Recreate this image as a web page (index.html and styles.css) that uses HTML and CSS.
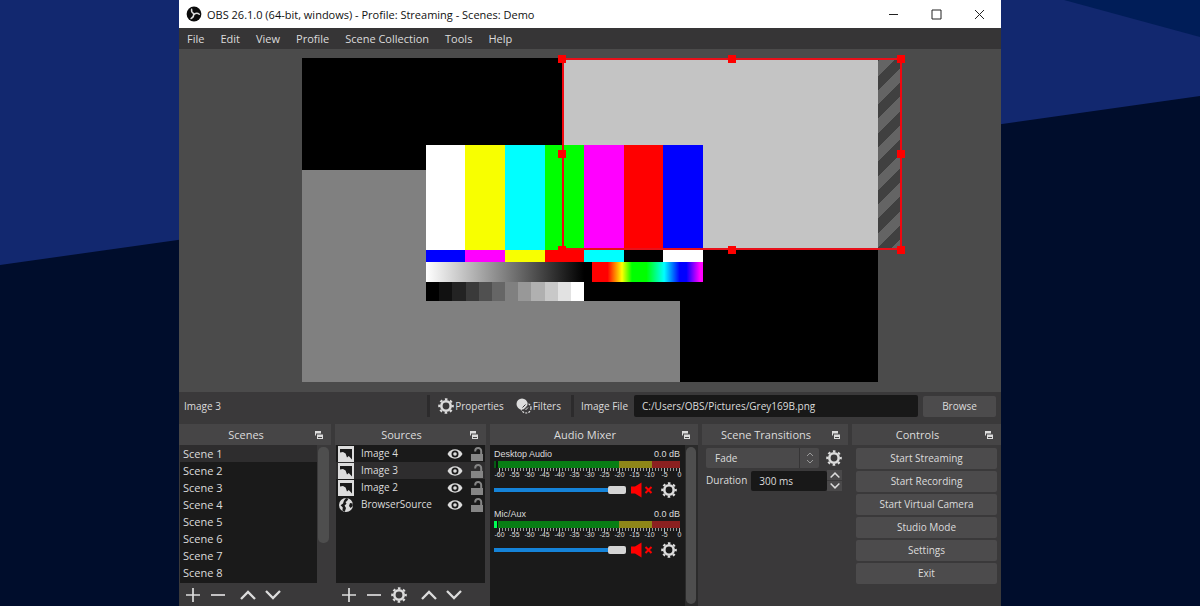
FILE: index.html
```html
<!DOCTYPE html>
<html lang="en">
<head>
  <meta charset="UTF-8">
  <title>OBS 26.1.0 - Profile: Streaming - Scenes: Demo</title>
  <meta name="viewport" content="width=device-width, initial-scale=1">
  <link rel="stylesheet" href="styles.css">
</head>
<body>
  <!-- desktop wallpaper -->
  <svg class="wallpaper" viewBox="0 0 1200 606" preserveAspectRatio="none" aria-hidden="true">
    <rect width="1200" height="606" fill="#12286f"/>
    <path d="M1064 0H1200V37Z" fill="#001d58"/>
    <path d="M0 265L1200 96V606H0Z" fill="#000d2c"/>
  </svg>

  <!-- shared icons -->
  <svg class="sprite" aria-hidden="true">
    <symbol id="gear" viewBox="0 0 16 16">
      <circle cx="8" cy="8" r="4.7" fill="none" stroke="currentColor" stroke-width="2.6"/>
      <circle cx="8" cy="8" r="6.8" fill="none" stroke="currentColor" stroke-width="2" stroke-dasharray="2.6 2.74" stroke-dashoffset="1.3"/>
    </symbol>
    <symbol id="plus" viewBox="0 0 16 16"><path d="M8 1V15M1 8H15" stroke="currentColor" stroke-width="1.7"/></symbol>
    <symbol id="minus" viewBox="0 0 16 16"><path d="M1 8H15" stroke="currentColor" stroke-width="1.7"/></symbol>
    <symbol id="up" viewBox="0 0 16 16"><path d="M1 12L8 5L15 12" fill="none" stroke="currentColor" stroke-width="2.3"/></symbol>
    <symbol id="down" viewBox="0 0 16 16"><path d="M1 4L8 11L15 4" fill="none" stroke="currentColor" stroke-width="2.3"/></symbol>
    <symbol id="float" viewBox="0 0 8 8">
      <path d="M0 0H6V2.500H1V4.500H0Z" fill="currentColor"/>
      <path d="M2 3.500H8V8H2ZM3 6V7H7V6Z" fill="currentColor" fill-rule="evenodd"/>
    </symbol>
    <symbol id="image" viewBox="0 0 16 16">
      <path d="M0 0H16V16H0Z" fill="currentColor"/>
      <path d="M2 3H14V13.5L10.8 10L9 11.5L7.6 7.5L5 6L2 6.5Z" fill="#1a1a1a"/>
    </symbol>
    <symbol id="globe" viewBox="0 0 16 16">
      <circle cx="8" cy="8" r="7" fill="currentColor"/>
      <path d="M8 1L10.5 1.8L9 4L7.5 5L8.5 6.8L6.6 8.5L8 11L6.8 14.8L4.4 13.6L4.8 10.5L2.6 8.2L5 6.5L6 3.5ZM12 6L14.6 6.4L14.8 9L12.6 11L11 9Z" fill="#1a1a1a"/>
    </symbol>
    <symbol id="eye" viewBox="0 0 16 12">
      <path d="M0.5 6C3.5 -0.2 12.5 -0.2 15.5 6C12.5 12.2 3.5 12.2 0.5 6Z" fill="currentColor"/>
      <circle cx="8" cy="6" r="3.5" fill="#1a1a1a"/>
      <circle cx="8" cy="6" r="1.8" fill="currentColor"/>
    </symbol>
    <symbol id="unlock" viewBox="0 0 12 14">
      <path d="M0 7H12V14H0Z" fill="currentColor"/>
      <path d="M4.2 4.5V4A3 3 0 0 1 10.2 4V8" fill="none" stroke="currentColor" stroke-width="2"/>
    </symbol>
    <symbol id="muted" viewBox="0 0 24 16">
      <path d="M1 4.5H5L11.5 0.500V15.500L5 11.500H1Z" fill="currentColor"/>
      <path d="M15.500 5L21.500 11M21.500 5L15.500 11" stroke="currentColor" stroke-width="2"/>
    </symbol>
  </svg>

  <main class="window">
    <header class="titlebar">
      <svg class="logo" viewBox="0 0 16 16" aria-hidden="true">
        <circle cx="8" cy="8" r="7.4" fill="#0b0b0b"/>
        <g fill="none" stroke="#ddd" stroke-width="1.5" stroke-linecap="round">
          <path d="M8 7.6C6.2 6.8 5.2 5.4 5.6 3.3"/>
          <path d="M8 7.6C6.2 6.8 5.2 5.4 5.6 3.3" transform="rotate(120 8 8)"/>
          <path d="M8 7.6C6.2 6.8 5.2 5.4 5.6 3.3" transform="rotate(240 8 8)"/>
        </g>
      </svg>
      <h1 class="title">OBS 26.1.0 (64-bit, windows) - Profile: Streaming - Scenes: Demo</h1>
      <div class="window-buttons">
        <button type="button" aria-label="Minimize"><svg viewBox="0 0 11 11"><path d="M1 5.5H10"/></svg></button>
        <button type="button" aria-label="Maximize"><svg viewBox="0 0 11 11"><path d="M1 1H10V10H1Z"/></svg></button>
        <button type="button" aria-label="Close"><svg viewBox="0 0 11 11"><path d="M1 1L10 10M10 1L1 10"/></svg></button>
      </div>
    </header>

    <nav class="menubar">
      <button type="button">File</button>
      <button type="button">Edit</button>
      <button type="button">View</button>
      <button type="button">Profile</button>
      <button type="button">Scene Collection</button>
      <button type="button">Tools</button>
      <button type="button">Help</button>
    </nav>

    <section class="preview" aria-label="Preview">
      <svg viewBox="0 0 822 343">
        <defs>
          <linearGradient id="stripes" gradientUnits="userSpaceOnUse" x1="700" y1="26" x2="714.3" y2="40.3" spreadMethod="repeat">
            <stop offset="0.5" stop-color="#404040"/>
            <stop offset="0.5" stop-color="#646464"/>
          </linearGradient>
          <linearGradient id="ramp">
            <stop offset="0" stop-color="#fff"/>
            <stop offset="1" stop-color="#000"/>
          </linearGradient>
          <linearGradient id="spectrum">
            <stop offset="0.14" stop-color="#f00"/>
            <stop offset="0.27" stop-color="#ff0"/>
            <stop offset="0.36" stop-color="#0f0"/>
            <stop offset="0.49" stop-color="#0f0"/>
            <stop offset="0.65" stop-color="#0ff"/>
            <stop offset="0.79" stop-color="#00f"/>
            <stop offset="0.85" stop-color="#00f"/>
            <stop offset="0.97" stop-color="#f0f"/>
          </linearGradient>
        </defs>
        <g shape-rendering="crispEdges">
          <rect x="123" y="9" width="576" height="324" fill="#000"/>
          <rect x="123" y="121" width="378" height="212" fill="#808080"/>
          <rect x="384" y="10" width="315" height="190" fill="#c4c4c4"/>
          <rect x="699" y="10" width="23" height="190" fill="url(#stripes)"/>
          <!-- test card -->
          <rect x="247" y="96" width="277" height="156" fill="#000"/>
          <rect x="247" y="96" width="39" height="105" fill="#fff"/>
          <rect x="286" y="96" width="40" height="105" fill="#f8ff00"/>
          <rect x="326" y="96" width="40" height="105" fill="#0ff"/>
          <rect x="366" y="96" width="39" height="105" fill="#0f0"/>
          <rect x="405" y="96" width="40" height="105" fill="#f0f"/>
          <rect x="445" y="96" width="39" height="105" fill="#f00"/>
          <rect x="484" y="96" width="40" height="105" fill="#00f"/>
          <rect x="247" y="201" width="39" height="12" fill="#00f"/>
          <rect x="286" y="201" width="40" height="12" fill="#f0f"/>
          <rect x="326" y="201" width="40" height="12" fill="#f8ff00"/>
          <rect x="366" y="201" width="39" height="12" fill="#f00"/>
          <rect x="405" y="201" width="40" height="12" fill="#0ff"/>
          <rect x="484" y="201" width="40" height="12" fill="#fff"/>
          <rect x="247" y="213" width="158" height="20" fill="url(#ramp)"/>
          <rect x="413" y="213" width="111" height="20" fill="url(#spectrum)"/>
          <rect x="260" y="233" width="13" height="19" fill="#111"/>
          <rect x="273" y="233" width="14" height="19" fill="#232323"/>
          <rect x="287" y="233" width="13" height="19" fill="#3a3a3a"/>
          <rect x="300" y="233" width="13" height="19" fill="#505050"/>
          <rect x="313" y="233" width="13" height="19" fill="#666"/>
          <rect x="326" y="233" width="13" height="19" fill="#808080"/>
          <rect x="339" y="233" width="13" height="19" fill="#989898"/>
          <rect x="352" y="233" width="14" height="19" fill="#b0b0b0"/>
          <rect x="366" y="233" width="13" height="19" fill="#c8c8c8"/>
          <rect x="379" y="233" width="13" height="19" fill="#e2e2e2"/>
          <rect x="392" y="233" width="13" height="19" fill="#fff"/>
          <!-- selected source outline -->
          <path d="M383 10H723M383 200H723" stroke="#e8101a" stroke-width="2"/>
          <path d="M384 10V200M722 10V200" stroke="#f00810" stroke-width="2"/>
          <path d="M379 6h8v8h-8zM549 6h8v8h-8zM718 6h8v8h-8zM379 101h8v8h-8zM718 101h8v8h-8zM379 197h8v8h-8zM549 197h8v8h-8zM718 197h8v8h-8z" fill="#f00"/>
        </g>
      </svg>
    </section>

    <section class="context">
      <span class="context-name">Image 3</span>
      <button class="tool" type="button"><svg class="icon"><use href="#gear"/></svg>Properties</button>
      <button class="tool" type="button">
        <svg class="icon" viewBox="0 0 16 16">
          <circle cx="6" cy="6" r="5.5" fill="currentColor"/>
          <circle cx="10" cy="10" r="5" fill="none" stroke="currentColor" stroke-width="1.2" stroke-dasharray="2 1.2"/>
          <path d="M6.5 9.500L9.500 6.500M8 11.500L11.500 8" stroke="#3a393a" stroke-width="1"/>
          <path d="M7.500 10.500L10.500 7.500M9.500 12L12 9.500" stroke="currentColor" stroke-width="1"/>
        </svg>Filters</button>
      <label class="file-label" for="file">Image File</label>
      <input class="file" id="file" type="text" value="C:/Users/OBS/Pictures/Grey169B.png">
      <button class="btn browse" type="button">Browse</button>
    </section>

    <div class="docks">
      <section class="dock">
        <h2 class="dock-title"><span>Scenes</span><button type="button" aria-label="Float Scenes"><svg><use href="#float"/></svg></button></h2>
        <div class="list-wrap">
          <ul class="list scenes">
            <li class="selected">Scene 1</li>
            <li>Scene 2</li>
            <li>Scene 3</li>
            <li>Scene 4</li>
            <li>Scene 5</li>
            <li>Scene 6</li>
            <li>Scene 7</li>
            <li>Scene 8</li>
          </ul>
          <div class="scrollbar"><div class="thumb thumb-scenes"></div></div>
        </div>
        <div class="toolbar">
          <button type="button" aria-label="Add scene"><svg class="icon"><use href="#plus"/></svg></button>
          <button type="button" aria-label="Remove scene"><svg class="icon"><use href="#minus"/></svg></button>
          <button class="push" type="button" aria-label="Move scene up"><svg class="icon"><use href="#up"/></svg></button>
          <button type="button" aria-label="Move scene down"><svg class="icon"><use href="#down"/></svg></button>
        </div>
      </section>

      <section class="dock">
        <h2 class="dock-title"><span>Sources</span><button type="button" aria-label="Float Sources"><svg><use href="#float"/></svg></button></h2>
        <ul class="list sources">
          <li><svg class="icon"><use href="#image"/></svg><span>Image 4</span><button type="button" aria-label="Hide Image 4"><svg class="eye"><use href="#eye"/></svg></button><button type="button" aria-label="Lock Image 4"><svg class="lock"><use href="#unlock"/></svg></button></li>
          <li class="selected"><svg class="icon"><use href="#image"/></svg><span>Image 3</span><button type="button" aria-label="Hide Image 3"><svg class="eye"><use href="#eye"/></svg></button><button type="button" aria-label="Lock Image 3"><svg class="lock"><use href="#unlock"/></svg></button></li>
          <li><svg class="icon"><use href="#image"/></svg><span>Image 2</span><button type="button" aria-label="Hide Image 2"><svg class="eye"><use href="#eye"/></svg></button><button type="button" aria-label="Lock Image 2"><svg class="lock"><use href="#unlock"/></svg></button></li>
          <li><svg class="icon"><use href="#globe"/></svg><span>BrowserSource</span><button type="button" aria-label="Hide BrowserSource"><svg class="eye"><use href="#eye"/></svg></button><button type="button" aria-label="Lock BrowserSource"><svg class="lock"><use href="#unlock"/></svg></button></li>
        </ul>
        <div class="toolbar">
          <button type="button" aria-label="Add source"><svg class="icon"><use href="#plus"/></svg></button>
          <button type="button" aria-label="Remove source"><svg class="icon"><use href="#minus"/></svg></button>
          <button type="button" aria-label="Source properties"><svg class="icon"><use href="#gear"/></svg></button>
          <button class="push" type="button" aria-label="Move source up"><svg class="icon"><use href="#up"/></svg></button>
          <button type="button" aria-label="Move source down"><svg class="icon"><use href="#down"/></svg></button>
        </div>
      </section>

      <section class="dock">
        <h2 class="dock-title"><span>Audio Mixer</span><button type="button" aria-label="Float Audio Mixer"><svg><use href="#float"/></svg></button></h2>
        <div class="mixer">
          <div class="channels">
            <div class="channel">
              <div class="channel-head"><label for="desktop">Desktop Audio</label><span>0.0 dB</span></div>
              <div class="meter"></div>
              <div class="ticks"></div>
              <div class="scale"><span>-60</span><span>-55</span><span>-50</span><span>-45</span><span>-40</span><span>-35</span><span>-30</span><span>-25</span><span>-20</span><span>-15</span><span>-10</span><span>-5</span><span>0</span></div>
              <div class="channel-controls">
                <input id="desktop" type="range" min="0" max="100" value="100">
                <button class="mute" type="button" aria-label="Unmute Desktop Audio"><svg><use href="#muted"/></svg></button>
                <button type="button" aria-label="Desktop Audio settings"><svg class="icon"><use href="#gear"/></svg></button>
              </div>
            </div>
            <div class="channel">
              <div class="channel-head"><label for="mic">Mic/Aux</label><span>0.0 dB</span></div>
              <div class="meter live"></div>
              <div class="ticks"></div>
              <div class="scale"><span>-60</span><span>-55</span><span>-50</span><span>-45</span><span>-40</span><span>-35</span><span>-30</span><span>-25</span><span>-20</span><span>-15</span><span>-10</span><span>-5</span><span>0</span></div>
              <div class="channel-controls">
                <input id="mic" type="range" min="0" max="100" value="100">
                <button class="mute" type="button" aria-label="Unmute Mic/Aux"><svg><use href="#muted"/></svg></button>
                <button type="button" aria-label="Mic/Aux settings"><svg class="icon"><use href="#gear"/></svg></button>
              </div>
            </div>
          </div>
          <div class="scrollbar"><div class="thumb"></div></div>
        </div>
      </section>

      <section class="dock">
        <h2 class="dock-title"><span>Scene Transitions</span><button type="button" aria-label="Float Scene Transitions"><svg><use href="#float"/></svg></button></h2>
        <div class="transitions">
          <div class="row">
            <div class="select">
              <select aria-label="Transition"><option>Fade</option></select>
              <svg viewBox="0 0 8 12"><path d="M1 4L4 1L7 4M1 8L4 11L7 8"/></svg>
            </div>
            <button type="button" aria-label="Transition properties"><svg class="icon"><use href="#gear"/></svg></button>
          </div>
          <div class="row duration">
            <label for="duration">Duration</label>
            <input id="duration" type="text" value="300 ms">
            <div class="spin">
              <button type="button" aria-label="Increase duration"><svg><use href="#up"/></svg></button>
              <button type="button" aria-label="Decrease duration"><svg><use href="#down"/></svg></button>
            </div>
          </div>
        </div>
      </section>

      <section class="dock">
        <h2 class="dock-title"><span>Controls</span><button type="button" aria-label="Float Controls"><svg><use href="#float"/></svg></button></h2>
        <div class="controls">
          <button class="btn" type="button">Start Streaming</button>
          <button class="btn" type="button">Start Recording</button>
          <button class="btn" type="button">Start Virtual Camera</button>
          <button class="btn" type="button">Studio Mode</button>
          <button class="btn" type="button">Settings</button>
          <button class="btn" type="button">Exit</button>
        </div>
      </section>
    </div>
  </main>
</body>
</html>
```

FILE: styles.css
```css
* { box-sizing: border-box; }
body { margin: 0; background: #000d2c; color: #dcdcdc; font: 11px/17px "Open Sans", "Noto Sans", sans-serif; }
button, input, select { margin: 0; padding: 0; border: 0; background: none; color: inherit; font: inherit; }
button { display: flex; align-items: center; justify-content: center; cursor: pointer; white-space: nowrap; }
svg { display: block; flex: none; }
h1, h2, ul { margin: 0; padding: 0; font-size: 11px; font-weight: 400; list-style: none; }

.wallpaper { position: fixed; z-index: -1; inset: 0; width: 100%; height: 100%; }
.sprite { position: absolute; width: 0; height: 0; }
.icon { width: 16px; height: 16px; }
.window { display: flex; flex-direction: column; height: 100vh; margin: 0 199px 0 179px; background: #3a393a; overflow: hidden; }

/* title and menu */
.titlebar { display: flex; align-items: center; height: 28px; padding-left: 7px; background: #fff; color: #111; }
.logo { width: 16px; height: 16px; margin-right: 5px; }
.title { flex: 1; white-space: nowrap; }
.window-buttons { display: flex; }
.window-buttons button { width: 43px; height: 28px; }
.window-buttons svg { width: 11px; height: 11px; fill: none; stroke: #222; }
.menubar { display: flex; gap: 16px; height: 21px; padding: 0 8px; background: #363536; }

/* preview */
.preview { flex: 1; min-height: 0; background: #4b4b4b; }
.preview svg { width: 100%; height: 100%; }

/* source toolbar */
.context { display: flex; align-items: center; height: 32px; padding: 3px 5px 7px; font-size: 10px; }
.context-name { flex: 1; align-self: stretch; line-height: 22px; border-right: 3px solid #2c2b2c; }
.tool { gap: 1px; margin-left: 8px; }
.tool + .tool { margin-left: 12px; }
.file-label { margin-left: 10px; padding-left: 7px; line-height: 22px; border-left: 3px solid #2c2b2c; white-space: nowrap; }
.file { width: 284px; height: 22px; margin: 0 5px 0 6px; padding: 0 8px; background: #181818; border-radius: 2px; }
.btn { height: 21px; background: #4c4b4c; border-radius: 2px; }
.browse { width: 73px; }

/* docks */
.docks { display: grid; grid-template-columns: 152fr 151fr 208fr 146fr 149fr; gap: 4px; }
.dock { display: flex; flex-direction: column; min-width: 0; }
.dock-title { display: flex; align-items: center; height: 21px; background: #464546; }
.dock-title span { flex: 1; padding-left: 6px; text-align: center; }
.dock-title button { width: 24px; height: 21px; }
.dock-title svg { width: 8px; height: 8px; }
.list-wrap { display: flex; flex: 1; }
.list { flex: 1; min-height: 138px; background: #1a1a1a; }
.selected { background: #2e2d2e; }
.scenes { margin-left: 1px; }
.scenes li { padding-left: 3px; }
.scrollbar { width: 14px; padding: 2px 2px 2px 1px; }
.thumb { height: 100%; background: #4e4e4e; border-radius: 5px; }
.thumb-scenes { height: 96px; }
.sources { margin: 0 1px; font-size: 10px; }
.sources li { display: flex; align-items: center; height: 17px; padding: 0 2px; }
.sources span { flex: 1; padding-left: 7px; }
.eye { width: 16px; height: 12px; margin-right: 8px; }
.lock { width: 12px; height: 14px; color: #858585; }
.toolbar { display: flex; align-items: center; gap: 9px; height: 23px; padding-left: 6px; }
.toolbar .push { margin-left: 5px; }

/* audio mixer */
.mixer { display: flex; flex: 1; background: #1a1a1a; }
.channels { flex: 1; padding: 1px 5px 0 4px; }
.channel { height: 60px; font: 9px/17px "Liberation Sans", sans-serif; }
.channel-head { display: flex; justify-content: space-between; height: 15px; }
.meter { height: 7px; background: linear-gradient(90deg, #065c14 2px, #111 2px 4px, #087e14 4px 67%, #8e8618 67% 85%, #8c2020 85%); }
.meter.live { background: linear-gradient(90deg, #0f5 3px, #111 3px 4px, #087e14 4px 67%, #8e8618 67% 85%, #8c2020 85%); }
.ticks { height: 4px; margin-left: 5px; background: repeating-linear-gradient(90deg, #bbb 0 1px, transparent 1px 15px), repeating-linear-gradient(90deg, #999 0 1px, transparent 1px 3px) 0 0 / 100% 3px no-repeat; }
.scale { display: flex; height: 6px; margin: 0 -7px 0 -2px; font-size: 7px; line-height: 6px; }
.scale span { flex: 1; text-align: center; }
.channel-controls { display: flex; align-items: center; height: 24px; padding-right: 3px; }
.channel-controls input { flex: 1; min-width: 0; height: 10px; appearance: none; background: linear-gradient(#1583d8, #1583d8) center / 100% 4px no-repeat; }
.channel-controls input::-webkit-slider-thumb { appearance: none; width: 18px; height: 8px; border-radius: 2px; background: #d4d4d4; }
.mute { margin: 0 7px 0 4px; color: #f00; }
.mute svg { width: 24px; height: 16px; }
.mixer .scrollbar { width: 13px; background: #2b2b2b; }

/* transitions */
.transitions { padding: 3px 6px 0 4px; font-size: 10px; }
.row { display: flex; align-items: center; margin-bottom: 2px; }
.select { position: relative; flex: 1; margin-right: 7px; }
.select select { width: 100%; height: 20px; padding-left: 9px; appearance: none; border-radius: 2px; background: linear-gradient(90deg, transparent calc(100% - 20px), #363536 calc(100% - 20px) calc(100% - 19px), transparent 0) #4a494a; }
.select svg { position: absolute; right: 5px; top: 4px; width: 8px; height: 12px; fill: none; stroke: #999; pointer-events: none; }
.duration input { flex: 1; min-width: 0; height: 20px; margin-left: 4px; padding-left: 8px; background: #181818; border-radius: 2px; }
.spin { display: grid; gap: 1px; }
.spin button { width: 15px; height: 10px; background: #4a494a; }
.spin svg { width: 10px; height: 10px; }

/* controls */
.controls { display: grid; gap: 2px; padding: 3px 4px 0; font-size: 10px; }
```
